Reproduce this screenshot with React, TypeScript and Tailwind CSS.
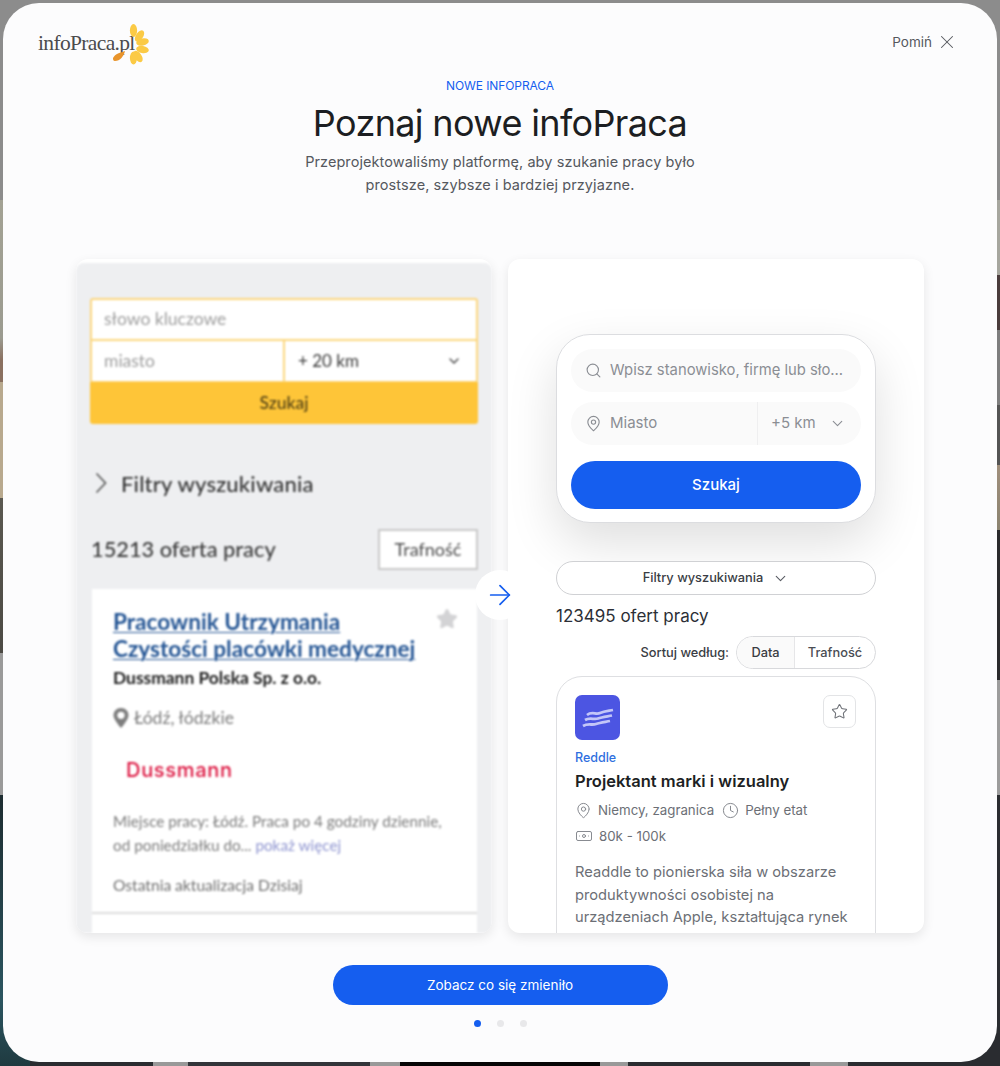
import React from 'react';
import { ArrowRight, Banknote, ChevronDown, Clock, MapPin, Search, Star, X } from 'lucide-react';

const inter = "font-['Inter',sans-serif]";
const lato = "font-['Lato',sans-serif]";

// petals of the infoPraca flower: cx, cy, angle
const petals: [number, number, number][] = [
  [20.5, 7.5, 0],
  [26.5, 13, 35],
  [29.5, 19, 78],
  [29.5, 26.5, 100],
  [25, 33.5, 145],
  [20.5, 35, 180],
];

const Logo: React.FC = () => (
  <div className="flex items-center">
    <span className="font-['Liberation_Serif',serif] text-[21.5px] leading-none tracking-[-0.65px] text-[#4b4b4d] -mt-[1px]">
      infoPraca.pl
    </span>
    <svg width="38" height="42" viewBox="0 0 38 42" className="ml-[-22px]">
      {petals.map(([cx, cy, a]) => (
        <ellipse key={a} cx={cx} cy={cy} rx="3.6" ry="6.4" fill="#fbca45" transform={`rotate(${a} ${cx} ${cy})`} />
      ))}
      <path d="M0 35 C2 31 6 30 12 28 C11 33 7 38 2 38 C0 38 0 36 0 35 Z" fill="#e8942c" />
    </svg>
  </div>
);

const OldMock: React.FC = () => (
  <div className={`${lato} h-full pt-[4px] flex flex-col`}>
    <div className="flex-1 bg-[#eeeff1] rounded-t-lg flex flex-col px-[14px] overflow-hidden blur-[0.8px]">
      <div className="mt-[35px] border-2 border-[#fcd77e] rounded-[3px] bg-white">
        <div className="h-[41px] flex items-center pl-[12px] text-[17.5px] text-[#9e9e9e] border-b-2 border-[#fcd77e]">
          słowo kluczowe
        </div>
        <div className="h-[40px] flex">
          <div className="w-[193px] flex items-center pl-[12px] text-[17.5px] text-[#9e9e9e] border-r-2 border-[#fcd77e]">miasto</div>
          <div className="flex-1 flex items-center justify-between pl-[13px] pr-[14px] text-[17px] text-[#3a3a3a]">
            <span>+ 20 km</span>
            <ChevronDown size={16} strokeWidth={2} className="text-[#444]" />
          </div>
        </div>
      </div>
      <div className="h-[42px] -mt-[1px] bg-[#fec538] rounded-b-[3px] flex items-center justify-center text-[17.5px] font-medium text-[#4f3f14]">
        Szukaj
      </div>
      <div className="mt-[45px] h-[28px] flex items-center pl-[5px] text-[22px] font-medium text-[#333] tracking-[0.2px]">
        <svg width="12" height="22" viewBox="0 0 12 22" fill="none" stroke="#555" strokeWidth="1.6" className="shrink-0">
          <path d="M1.5 1.5 L10.5 11 L1.5 20.5" />
        </svg>
        <span className="ml-[14px]">Filtry wyszukiwania</span>
      </div>
      <div className="mt-[32px] flex items-center justify-between">
        <span className="ml-[1px] text-[21.8px] font-medium text-[#3c3c3c]">15213 oferta pracy</span>
        <div className="w-[100px] h-[41px] border-2 border-[#c9c9c9] bg-white flex items-center justify-center text-[18px] text-[#4c4c4c]">
          Trafność
        </div>
      </div>
      <div className="mt-[19px] ml-[2px] mr-[1px] flex-1 bg-white flex flex-col overflow-hidden">
        <div className="h-[325px] border-b-2 border-[#dcdcdc] px-[21px] pt-[19px] relative">
          <Star size={22} className="absolute right-[19px] top-[19px] text-[#d3d3d5] fill-[#d3d3d5]" />
          <div className="text-[22.6px] leading-[27px] font-bold text-[#245594] underline underline-offset-2 decoration-1 whitespace-nowrap">
            Pracownik Utrzymania
            <br />
            Czystości placówki medycznej
          </div>
          <div className="mt-[2px] text-[17.4px] leading-[27px] font-bold text-[#1c1c1c]">Dussmann Polska Sp. z o.o.</div>
          <div className="mt-[14px] flex items-center gap-[5px] text-[17.6px] text-[#7c7c7c]">
            <svg width="16" height="20" viewBox="0 0 16 20" className="shrink-0">
              <path d="M8 0 C3.5 0 0.5 3.3 0.5 7.3 C0.5 12 8 20 8 20 C8 20 15.5 12 15.5 7.3 C15.5 3.3 12.5 0 8 0 Z" fill="#7e7e7e" />
              <circle cx="8" cy="7.3" r="3.6" fill="#fff" />
            </svg>
            <span>Łódź, łódzkie</span>
          </div>
          <div className={`${inter} mt-[25px] ml-[13px] text-[20px] leading-[28px] font-medium text-[#dc143f] tracking-[0.7px]`}>Dussmann</div>
          <div className="mt-[25px] text-[15.3px] leading-[24px] text-[#7c7c7c]">
            Miejsce pracy: Łódź. Praca po 4 godziny dziennie,
            <br />
            od poniedziałku do... <span className="text-[#8f95d0]">pokaż więcej</span>
          </div>
          <div className="mt-[16px] text-[15.6px] leading-[24px] text-[#6e6e6e]">Ostatnia aktualizacja Dzisiaj</div>
        </div>
      </div>
    </div>
  </div>
);

const NewMock: React.FC = () => (
  <div className="h-full overflow-hidden px-[48px] pt-[75px] flex flex-col text-[#2c2f36]">
    <div className="shrink-0 h-[189px] rounded-[34px] bg-white border border-[#dcdde0] shadow-[0_20px_50px_rgba(0,0,0,0.13)] px-[14px] pt-[14px]">
      <div className="h-[43px] rounded-full bg-[#fafafa] flex items-center pl-[14px] gap-[8px] text-[14.8px] text-[#8b8e94] whitespace-nowrap">
        <Search size={17} strokeWidth={1.6} />
        <span>Wpisz stanowisko, firmę lub sło...</span>
      </div>
      <div className="mt-[10px] h-[43px] rounded-full bg-[#fafafa] flex items-center text-[15px] text-[#8b8e94]">
        <div className="w-[187px] h-full flex items-center pl-[14px] gap-[8px] border-r border-[#efeff0]">
          <MapPin size={17} strokeWidth={1.6} />
          <span>Miasto</span>
        </div>
        <span className="ml-[13px]">+5 km</span>
        <ChevronDown size={17} strokeWidth={1.6} className="ml-[13px]" />
      </div>
      <div className="mt-[16px] h-[48px] rounded-full bg-[#155eef] flex items-center justify-center text-[15px] font-medium text-white">
        Szukaj
      </div>
    </div>
    <div className="shrink-0 mt-[38px] h-[34px] rounded-full border border-[#d0d1d4] bg-white flex items-center justify-center gap-[9px] text-[12.8px] font-medium text-[#3a3d44]">
      <span>Filtry wyszukiwania</span>
      <ChevronDown size={17} strokeWidth={1.6} className="text-[#5a5d64]" />
    </div>
    <div className="shrink-0 mt-[10px] text-[17px] leading-[22px] text-[#2c2f36]">123495 ofert pracy</div>
    <div className="shrink-0 mt-[9px] flex items-center justify-end gap-[7px] text-[12.8px] font-medium text-[#3a3d44]">
      <span>Sortuj według:</span>
      <div className="w-[140px] h-[33px] rounded-full border border-[#d8d9dc] flex overflow-hidden">
        <div className="w-[58px] bg-[#fafafa] border-r border-[#e6e6e8] flex items-center justify-center">Data</div>
        <div className="flex-1 flex items-center justify-center text-[#4a4d54]">Trafność</div>
      </div>
    </div>
    <div className="shrink-0 mt-[7px] h-[300px] rounded-t-[26px] border border-[#dedfe2] px-[18px] pt-[18px] bg-white">
      <div className="flex justify-between items-start">
        <div className="w-[45px] h-[45px] rounded-[7px] bg-[#4c55e2] flex items-center justify-center">
          <svg width="32" height="20" viewBox="0 0 32 20" fill="none" stroke="#c3c6f8" strokeWidth="2.8">
            <path d="M5 7 C10 3 14 7 18 5 C22 3.4 26 3 31 2" />
            <path d="M3 12 C8 9 12 12 16 10.5 C20 9 25 8.5 30 7.5" />
            <path d="M1 18 C6 15 10 17.5 14 16 C18 14.5 23 14 28 13" />
          </svg>
        </div>
        <div className="w-[33px] h-[33px] rounded-[7px] border border-[#e3e4e6] flex items-center justify-center mr-[1px]">
          <Star size={17} strokeWidth={1.5} className="text-[#6f7278]" />
        </div>
      </div>
      <div className="mt-[10px] text-[12.5px] leading-[16px] font-medium text-[#2f6fe0]">Reddle</div>
      <div className="mt-[4px] text-[16.5px] leading-[22px] font-semibold text-[#1d1f24]">Projektant marki i wizualny</div>
      <div className="mt-[9px] flex items-center text-[13.3px] leading-[18px] text-[#6c6f76]">
        <MapPin size={17} strokeWidth={1.4} className="text-[#85888e]" />
        <span className="ml-[6px]">Niemcy, zagranica</span>
        <Clock size={17} strokeWidth={1.4} className="ml-[8px] text-[#85888e]" />
        <span className="ml-[6px]">Pełny etat</span>
      </div>
      <div className="mt-[8px] flex items-center text-[13.3px] leading-[18px] text-[#6c6f76]">
        <Banknote size={18} strokeWidth={1.3} className="text-[#85888e]" />
        <span className="ml-[6px]">80k - 100k</span>
      </div>
      <div className="mt-[16px] text-[14.7px] leading-[22.5px] text-[#6c6f76] whitespace-nowrap">
        Readdle to pionierska siła w obszarze
        <br />
        produktywności osobistej na
        <br />
        urządzeniach Apple, kształtująca rynek
      </div>
    </div>
  </div>
);

const App: React.FC = () => (
  <div className={`${inter} relative w-full h-[1066px] overflow-hidden bg-[#8c8c8c] p-[3px] pb-[4px]`}>
    {/* strips of the blurred page behind the dialog */}
    <div className="absolute left-0 top-0 w-[30px] h-full bg-[linear-gradient(180deg,#8c8c8c_0,#8c8c8c_200px,#a3a294_200px,#9b9b90_338px,#8a7060_360px,#8a7060_382px,#b8a98e_382px,#b8a98e_498px,#5a5850_498px,#4c4a44_653px,#9a9a9a_653px,#9a9a9a_795px,#1d2c30_795px,#2b5560_1000px,#1f3a40_1066px)]" />
    <div className="absolute right-0 top-0 w-[30px] h-full bg-[linear-gradient(180deg,#8c8c8c_0,#8c8c8c_200px,#a6a69e_200px,#a6a69e_275px,#4a3c3c_275px,#4a3c3c_330px,#7e7e7e_330px,#7e7e7e_405px,#545454_405px,#545454_465px,#a08f7c_465px,#8b8370_530px,#2a2a2c_530px,#2a2a2c_680px,#9c9c9c_680px,#9c9c9c_795px,#2a2c30_795px)]" />
    <div className="absolute left-[30px] right-[30px] bottom-0 h-[6px] bg-[linear-gradient(90deg,#2a2c30_0,#2a2c30_123px,#999_123px,#999_158px,#33353a_158px,#33353a_340px,#999_340px,#999_370px,#060606_370px,#060606_570px,#999_570px,#999_598px,#2a2c30_598px,#2a2c30_780px,#999_780px,#999_818px,#2a2c30_818px)]" />

    <div className="relative h-full rounded-[36px] bg-[#fcfcfd] flex flex-col px-[35px]">
      <div className="h-[76px] shrink-0 flex items-start justify-between pt-[20px]">
        <Logo />
        <div className="flex items-center gap-[4px] mt-[8px] mr-[4px] text-[13.5px] text-[#55585e]">
          <span>Pomiń</span>
          <X size={22} strokeWidth={1.1} />
        </div>
      </div>

      <div className="shrink-0 flex flex-col items-center">
        <div className="text-[12px] leading-[14px] tracking-[-0.1px] text-[#155eef]">NOWE INFOPRACA</div>
        <h1 className="mt-[8px] text-[36px] leading-[44px] font-normal tracking-[-0.65px] text-[#1c1e22]">Poznaj nowe infoPraca</h1>
        <p className="mt-[5px] text-center text-[14.5px] leading-[23px] tracking-[0.08px] text-[#55585e]">
          Przeprojektowaliśmy platformę, aby szukanie pracy było
          <br />
          prostsze, szybsze i bardziej przyjazne.
        </p>
      </div>

      <div className="relative shrink-0 mt-[63px] mx-[38px] h-[674px] flex gap-4">
        <div className="w-[416px] h-full rounded-xl bg-white shadow-[0_4px_12px_rgba(0,0,0,0.09)] overflow-hidden">
          <OldMock />
        </div>
        <div className="w-[416px] h-full rounded-xl bg-white shadow-[0_4px_12px_rgba(0,0,0,0.09)] overflow-hidden">
          <NewMock />
        </div>
        <div className="absolute left-[399px] top-[311px] w-[50px] h-[50px] rounded-full bg-white flex items-center justify-center">
          <ArrowRight size={32} strokeWidth={1.3} className="text-[#155eef]" />
        </div>
      </div>

      <div className="shrink-0 mt-[32px] mx-auto w-[335px] h-[40px] rounded-full bg-[#155eef] flex items-center justify-center text-[13.5px] text-white">
        Zobacz co się zmieniło
      </div>
      <div className="shrink-0 mt-[15px] flex justify-center gap-[16px]">
        <span className="w-[7px] h-[7px] rounded-full bg-[#155eef]" />
        <span className="w-[7px] h-[7px] rounded-full bg-[#e8e8ea]" />
        <span className="w-[7px] h-[7px] rounded-full bg-[#e8e8ea]" />
      </div>
    </div>
  </div>
);

export default App;
